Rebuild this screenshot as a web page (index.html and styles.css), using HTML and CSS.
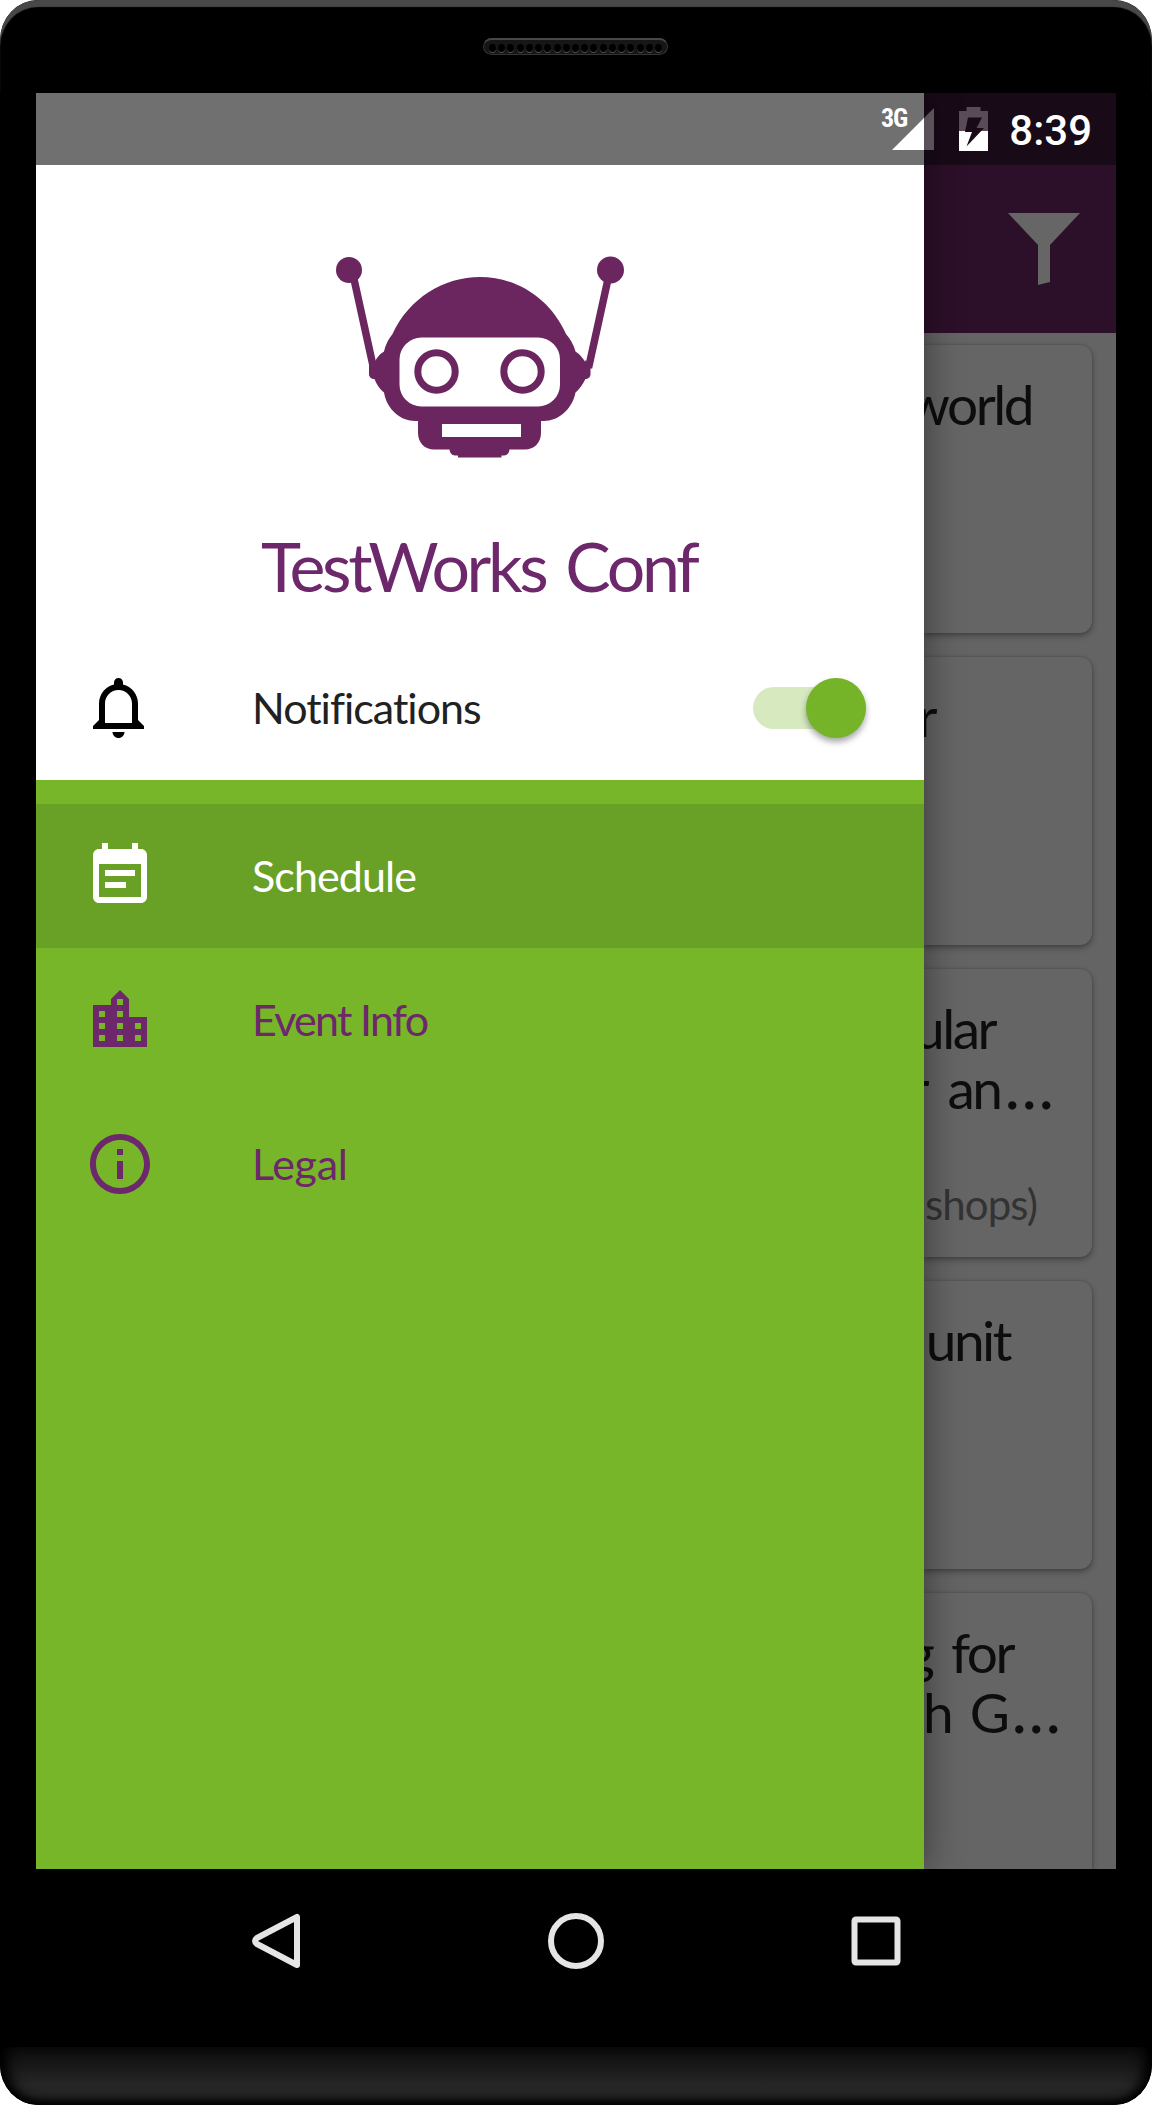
FILE: index.html
```html
<!DOCTYPE html>
<html lang="en">
<head>
<meta charset="utf-8">
<title>TestWorks Conf</title>
<link rel="stylesheet" href="styles.css">
</head>
<body>
<div class="phone">
  <header class="bezel-top">
    <div class="speaker">
      <i></i><i></i><i></i><i></i><i></i><i></i><i></i><i></i><i></i><i></i><i></i><i></i><i></i><i></i><i></i><i></i><i></i><i></i><i></i>
    </div>
  </header>

  <main class="screen">
    <aside class="drawer">
      <section class="drawer-header">
        <svg class="logo" viewBox="0 0 300 210" fill="#6b265f">
          <g stroke="#6b265f" stroke-width="7.500">
            <path d="M16 14 L37.500 112M274 14 L252.500 112"/>
          </g>
          <circle cx="13" cy="14" r="13"/>
          <circle cx="274.500" cy="14" r="13.500"/>
          <path d="M33 109l5-5 4 19h-5q-4-1-4-5zM254.500 109l-5-5-4 19h5q4-1 4-5z"/>
          <path d="M56.500 78C73 42 108 21 144 21S214 42 230 78Q237 86 239.500 95.500Q245 99 250 107V122Q245 132 239.500 136.500C236 154 222 165 208 165H205V177C205 187 198 193.500 189 193.500H173.500Q173 199 168 199.500H165.500V201.500H122V199.500H119Q114 199 113.500 193.500H98C89 193.500 82 187 82 177V165H79C65 165 51 154 48 136.500Q42 132 38 122V107Q42 99 48 95.500Q50 86 56.500 78Z"/>
          <g fill="#fff">
            <rect x="63.500" y="81.500" width="160.500" height="69" rx="22"/>
            <rect x="106" y="168" width="79" height="13"/>
            <circle cx="100.500" cy="115.500" r="18.700" stroke="#6b265f" stroke-width="7"/>
            <circle cx="186.500" cy="115.500" r="18.700" stroke="#6b265f" stroke-width="7"/>
          </g>
        </svg>
        <h1 class="app-name">TestWorks Conf</h1>
        <div class="row">
          <svg class="icon bell" viewBox="0 0 24 24"><path d="M11.500 22c1.100 0 2-.9 2-2h-4c0 1.100.9 2 2 2zm6.500-6v-5.500c0-3.070-2.130-5.640-5-6.320V3.500c0-.83-.67-1.500-1.500-1.500S10 2.670 10 3.500v.68c-2.870.68-5 3.250-5 6.320V16l-2 2v1h17v-1l-2-2zm-2 1H7v-6.500C7 8.010 9.010 6 11.500 6S16 8.010 16 10.500V17z"/></svg>
          <span class="label label-notifications">Notifications</span>
          <span class="switch"><span class="thumb"></span></span>
        </div>
      </section>
      <nav class="menu">
        <a class="row selected">
          <svg class="icon" viewBox="0 0 24 24"><path d="M17 10H7v2h10v-2zm2-7h-1V1h-2v2H8V1H6v2H5c-1.110 0-1.990.9-1.990 2L3 19c0 1.100.89 2 2 2h14c1.100 0 2-.9 2-2V5c0-1.100-.9-2-2-2zm0 16H5V8h14v11zm-5-5H7v2h7v-2z"/></svg>
          <span class="label label-schedule">Schedule</span>
        </a>
        <a class="row">
          <svg class="icon" viewBox="0 0 24 24"><path d="M15 11V5l-3-3-3 3v2H3v14h18V11h-6zm-8 8H5v-2h2v2zm0-4H5v-2h2v2zm0-4H5V9h2v2zm6 8h-2v-2h2v2zm0-4h-2v-2h2v2zm0-4h-2V9h2v2zm0-4h-2V5h2v2zm6 12h-2v-2h2v2zm0-4h-2v-2h2v2z"/></svg>
          <span class="label label-event">Event Info</span>
        </a>
        <a class="row">
          <svg class="icon" viewBox="0 0 24 24"><path d="M11 17h2v-6h-2v6zm1-15C6.480 2 2 6.480 2 12s4.480 10 10 10 10-4.480 10-10S17.520 2 12 2zm0 18c-4.410 0-8-3.590-8-8s3.590-8 8-8 8 3.590 8 8-3.590 8-8 8zM11 9h2V7h-2v2z"/></svg>
          <span class="label label-legal">Legal</span>
        </a>
      </nav>
    </aside>

    <section class="content">
      <div class="status-spacer"></div>
      <div class="toolbar">
        <svg class="filter" viewBox="0 0 72 72"><path d="M0 0H72L42 32V69L30 72V32Z"/></svg>
      </div>
      <div class="cards">
        <article class="card"><p class="line end-62">world</p></article>
        <article class="card"><p class="line end-155">r</p></article>
        <article class="card">
          <p class="line end-95">ular</p>
          <p class="line end-41">r an<span class="dots">…</span></p>
          <p class="line room end-56">shops)</p>
        </article>
        <article class="card"><p class="line end-82">unit</p></article>
        <article class="card">
          <p class="line end-77">g for</p>
          <p class="line end-34">h G<span class="dots">…</span></p>
        </article>
      </div>
    </section>

    <div class="status-bar">
      <span class="network">3G</span>
      <svg class="signal" viewBox="0 0 42 42" fill="#fff"><path d="M42 0V42H32V10Z" opacity=".3"/><path d="M32 10V42H0Z"/></svg>
      <svg class="battery" viewBox="0 0 29 44">
        <path d="M7.500 0H21.500V4H29V24H0V4H7.500Z" fill="#5a4b59"/>
        <path d="M0 24H29V44H0Z" fill="#fff"/>
        <path d="M9 10.500H23L17.500 21H25L7.500 39.500L13 25H6Z" fill="#190a18"/>
      </svg>
      <span class="clock">8:39</span>
    </div>
  </main>

  <footer class="nav-bar">
    <svg class="nav-icon" viewBox="0 0 60 60"><path d="M51 6V54L11 33Q7 30 11 27Z"/></svg>
    <svg class="nav-icon" viewBox="0 0 60 60"><circle cx="30" cy="30" r="25"/></svg>
    <svg class="nav-icon" viewBox="0 0 60 60"><rect x="8.500" y="8.500" width="43" height="43" rx="1.500"/></svg>
  </footer>
  <div class="chin"></div>
</div>
</body>
</html>
```
FILE: styles.css
```css
* { box-sizing: border-box; }

body {
  margin: 0;
  background: #fff;
  font-family: Futura, Lato, sans-serif;
}

.phone {
  display: flex;
  flex-direction: column;
  width: 1152px;
  height: 2105px;
  overflow: hidden;
  border-radius: 38px / 40px;
  background: #000;
}

/* Handset top */
.bezel-top {
  display: flex;
  justify-content: center;
  flex: none;
  height: 93px;
  padding: 38px 1px 0 0;
  border-radius: 38px 38px 0 0 / 40px 40px 0 0;
  box-shadow: inset 0 7px 1px #484848;
}

.speaker {
  display: flex;
  align-items: center;
  justify-content: space-between;
  width: 185px;
  height: 17px;
  padding: 1px 5px 0;
  border: 1px solid #333;
  border-top: 2px solid #484848;
  border-radius: 9px;
  background: #161616;
}

.speaker i {
  width: 7px;
  height: 8px;
  border-radius: 50%;
  background: #000;
  box-shadow: 0 1px 0 #505050;
}

/* Screen */
.screen {
  position: relative;
  display: flex;
  flex: none;
  width: 1080px;
  height: 1776px;
  margin: 0 36px;
  overflow: hidden;
}

.drawer {
  z-index: 1;
  flex: none;
  width: 888px;
  background: #77b629;
  box-shadow: 0 0 36px rgba(0, 0, 0, .45);
}

.drawer-header {
  display: flex;
  flex-direction: column;
  height: 687px;
  padding-top: 163px;
  background: #fff;
}

.logo {
  flex: none;
  width: 300px;
  height: 210px;
  margin-left: 300px;
  overflow: visible;
}

.app-name {
  margin: 58px 0 0;
  padding-left: 225px;
  color: #6d276b;
  font-size: 68px;
  font-weight: 400;
  line-height: 84px;
  letter-spacing: -3.350px;
  word-spacing: 6px;
  white-space: nowrap;
}

.row {
  display: flex;
  align-items: center;
  height: 144px;
  padding: 0 58px 0 48px;
  color: #6d276b;
}

.drawer-header .row {
  margin-top: 28px;
}

.icon {
  flex: none;
  width: 72px;
  height: 72px;
  fill: currentColor;
}

.bell { color: #000; }

.label {
  margin-left: 96px;
  font-size: 43px;
  line-height: 52px;
  white-space: nowrap;
}

.label-notifications {
  color: #212121;
  letter-spacing: -1px;
}

.label-schedule { letter-spacing: -.9px; }
.label-event { letter-spacing: -1.700px; }
.label-legal { letter-spacing: -.3px; }

.switch {
  display: flex;
  align-items: center;
  justify-content: flex-end;
  width: 113px;
  height: 42px;
  margin-left: auto;
  border-radius: 21px;
  background: #d6e9bf;
}

.thumb {
  flex: none;
  width: 60px;
  height: 60px;
  border-radius: 50%;
  background: #75b329;
  box-shadow: 0 4px 6px rgba(0, 0, 0, .35);
}

.menu { padding-top: 24px; }

.selected {
  background: #69a126;
  color: #fff;
}

/* Dimmed content behind the drawer */
.content {
  display: flex;
  flex: none;
  flex-direction: column;
  width: 192px;
  background: #646464;
}

.status-spacer {
  flex: none;
  height: 72px;
  background: #190a18;
}

.toolbar {
  display: flex;
  flex: none;
  justify-content: flex-end;
  height: 168px;
  padding: 48px 36px 0 0;
  background: #2c0f29;
}

.filter {
  width: 72px;
  height: 72px;
  fill: #666;
}

.cards {
  display: flex;
  flex-direction: column;
  gap: 24px;
  padding: 12px 24px 0 0;
}

.card {
  flex: none;
  height: 288px;
  padding-top: 29px;
  border-radius: 0 12px 12px 0;
  background: #656565;
  box-shadow: 0 3px 6px rgba(0, 0, 0, .3), 0 0 3px rgba(0, 0, 0, .2);
}

.line {
  display: flex;
  align-items: baseline;
  justify-content: flex-end;
  height: 60px;
  margin: 0;
  color: #0d0d0d;
  font-size: 55px;
  line-height: 60px;
  letter-spacing: -2.500px;
  word-spacing: 7px;
  white-space: pre;
}

.dots {
  margin-left: 4px;
  font-size: 66px;
  line-height: 40px;
  letter-spacing: 0;
}

.end-34 { padding-right: 31px; }
.end-41 { padding-right: 38px; word-spacing: 10px; }
.end-56 { padding-right: 55px; }
.end-62 { padding-right: 60px; }
.end-77 { padding-right: 79px; }
.end-82 { padding-right: 82px; }
.end-95 { padding-right: 97px; }
.end-155 { padding-right: 157px; }

.room {
  margin-top: 56px;
  color: #333;
  font-size: 42px;
  letter-spacing: -.9px;
}

/* System status bar, drawn over both panes */
.status-bar {
  position: absolute;
  z-index: 2;
  top: 0;
  left: 0;
  display: flex;
  width: 1080px;
  height: 72px;
  padding-right: 24px;
  justify-content: flex-end;
  background: linear-gradient(90deg, #707070 888px, transparent 888px);
  color: #fff;
  font-family: Roboto, sans-serif;
}

.network {
  margin: 10px -15px 0 0;
  font-family: "Roboto Condensed", Roboto, sans-serif;
  font-size: 26px;
  font-weight: 700;
  line-height: 30px;
  letter-spacing: -1px;
}

.signal {
  width: 42px;
  height: 42px;
  margin: 15px 25px 0 0;
}

.battery {
  width: 29px;
  height: 44px;
  margin: 14px 21px 0 0;
}

.clock {
  margin-top: 13px;
  font-size: 42px;
  font-weight: 500;
  line-height: 50px;
}

/* Navigation keys */
.nav-bar {
  display: flex;
  flex: none;
  align-items: flex-start;
  justify-content: space-between;
  height: 178px;
  padding: 42px 246px 0;
}

.nav-icon {
  width: 60px;
  height: 60px;
  fill: none;
  stroke: #e5e5e5;
  stroke-width: 6px;
  stroke-linejoin: round;
}

.chin {
  flex: 1;
  border-radius: 0 0 38px 38px / 0 0 40px 40px;
  background: linear-gradient(#0b0b0b, #262626 65%, #242424);
  box-shadow: inset 0 -10px 8px -5px #000, inset 16px 0 14px -8px #000, inset -16px 0 14px -8px #000;
}
```
